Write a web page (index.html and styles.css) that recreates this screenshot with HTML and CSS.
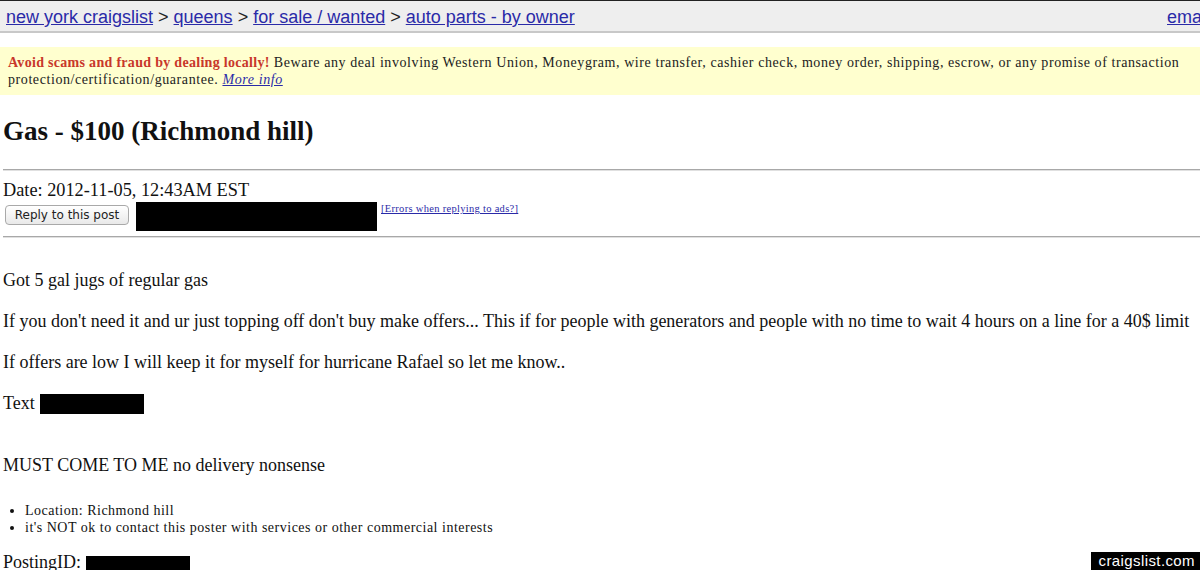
FILE: index.html
```html
<!DOCTYPE html>
<html>
<head>
<meta charset="utf-8">
<link rel="stylesheet" href="styles.css">
</head>
<body>
<div class="topbar">
  <div class="crumbs">
    <a href="#">new york craigslist</a> &gt; <a href="#">queens</a> &gt; <a href="#">for sale / wanted</a> &gt; <a href="#">auto parts - by owner</a>
  </div>
  <div class="email"><a href="#">email this posting to a friend</a></div>
</div>
<div class="warning">
  <b class="warn-red">Avoid scams and fraud by dealing locally!</b> Beware any deal involving Western Union, Moneygram, wire transfer, cashier check, money order, shipping, escrow, or any promise of transaction protection/certification/guarantee. <a href="#" class="more">More info</a>
</div>
<main class="page">
  <h2 class="title">Gas - $100 (Richmond hill)</h2>
  <div class="rule"></div>
  <div class="date">Date: 2012-11-05, 12:43AM EST</div>
  <div class="reply-row">
    <button class="reply-btn">Reply to this post</button>
    <span class="redact redact-email"></span>
    <a href="#" class="errors">[Errors when replying to ads?]</a>
  </div>
  <div class="rule"></div>
  <div class="body">
    <p>Got 5 gal jugs of regular gas</p>
    <p>If you don't need it and ur just topping off don't buy make offers... This if for people with generators and people with no time to wait 4 hours on a line for a 40$ limit</p>
    <p>If offers are low I will keep it for myself for hurricane Rafael so let me know..</p>
    <p>Text <span class="redact redact-small"></span></p>
    <p class="must">MUST COME TO ME no delivery nonsense</p>
  </div>
  <ul class="facts">
    <li>Location: Richmond hill</li>
    <li>it's NOT ok to contact this poster with services or other commercial interests</li>
  </ul>
  <div class="posting">PostingID: <span class="redact redact-id"></span></div>
</main>
<div class="watermark">craigslist.com</div>
</body>
</html>
```
FILE: styles.css
```css
html, body {
  margin: 0;
  padding: 0;
  background: #fff;
  overflow: hidden;
}
body {
  width: 1200px;
  height: 570px;
  position: relative;
  font-family: "Liberation Serif", "Times New Roman", serif;
  color: #111;
}
a { color: #2a2aa8; }

.topbar {
  border-top: 1px solid #222;
  background: #eeeeee;
  border-bottom: 2px solid #c8c8c8;
  height: 33px;
  box-sizing: border-box;
  display: flex;
  align-items: center;
  font-family: "Liberation Sans", Arial, sans-serif;
  font-size: 18px;
  padding: 3px 0 0 6px;
}
.crumbs { flex: 1; white-space: nowrap; color: #222; }
.email {
  width: 33px;
  overflow: hidden;
  white-space: nowrap;
}

.warning {
  margin-top: 14px;
  background: #ffffcf;
  padding: 7px 8px 6px;
  font-size: 14px;
  letter-spacing: 0.58px;
  line-height: 17px;
  height: 35px;
  color: #222;
}
.warn-red { color: #c8372b; letter-spacing: 0.3px; }
.more { font-style: italic; }

.page { padding-left: 3px; }

.title {
  font-size: 27px;
  font-weight: bold;
  margin: 20px 0 22px;
  line-height: 32px;
  color: #111;
}
.rule {
  height: 1px;
  background: #a8a8a8;
  border-bottom: 1px solid #e0e0e0;
}
.date {
  font-size: 18.3px;
  line-height: 22px;
  margin-top: 8px;
}
.reply-row {
  display: flex;
  align-items: flex-start;
  height: 35px;
}
.reply-btn {
  font-family: "DejaVu Sans", "Liberation Sans", sans-serif;
  font-size: 12px;
  margin: 4px 0 0 2px;
  padding: 0 7px;
  width: 124px;
  height: 20px;
  border: 1px solid #a9a9a9;
  border-radius: 4px;
  background: linear-gradient(#ffffff, #e9e9e9);
  color: #222;
}
.redact { display: inline-block; background: #000; }
.redact-email {
  width: 241px;
  height: 29px;
  margin: 1px 0 0 7px;
}
.errors {
  font-size: 10.5px;
  letter-spacing: 0.3px;
  margin-left: 4px;
  margin-top: 2px;
}

.body { font-size: 18px; }
.body p { margin: 0; line-height: 22px; margin-top: 19px; }
.body p:first-child { margin-top: 31px; }
.redact-small { width: 104px; height: 20px; vertical-align: -5px; margin-left: 1px; }
.body p.must { margin-top: 40px; }

.facts {
  margin: 26px 0 0;
  padding-left: 22px;
  font-size: 14px;
  letter-spacing: 0.5px;
  line-height: 17px;
}
.posting {
  margin-top: 15px;
  font-size: 18px;
  line-height: 22px;
}
.redact-id { width: 104px; height: 16px; vertical-align: -4px; }

.watermark {
  position: absolute;
  right: 0;
  bottom: 0;
  background: #000;
  color: #fff;
  font-family: "Liberation Sans", Arial, sans-serif;
  font-size: 15px;
  line-height: 18px;
  padding: 0 5px 0 8px;
  letter-spacing: 0.4px;
}
```
